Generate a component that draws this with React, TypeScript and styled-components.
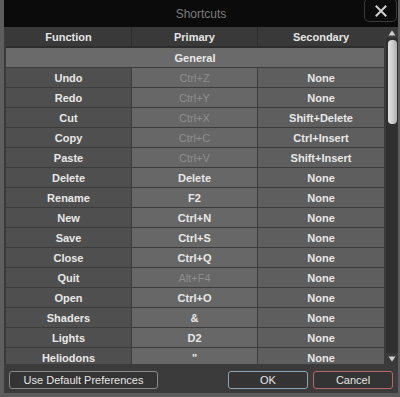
import styled, { createGlobalStyle } from 'styled-components';

const GlobalStyle = createGlobalStyle`
    html, body {
        margin: 0;
        padding: 0;
        background: #3a3a3a;
        font-family: "Liberation Sans", Arial, sans-serif;
    }
`;

type Shortcut = {
    name: string;
    primary: string;
    secondary: string;
    disabled?: boolean;
};

const shortcuts: Shortcut[] = [
    { name: 'Undo', primary: 'Ctrl+Z', secondary: 'None', disabled: true },
    { name: 'Redo', primary: 'Ctrl+Y', secondary: 'None', disabled: true },
    { name: 'Cut', primary: 'Ctrl+X', secondary: 'Shift+Delete', disabled: true },
    { name: 'Copy', primary: 'Ctrl+C', secondary: 'Ctrl+Insert', disabled: true },
    { name: 'Paste', primary: 'Ctrl+V', secondary: 'Shift+Insert', disabled: true },
    { name: 'Delete', primary: 'Delete', secondary: 'None' },
    { name: 'Rename', primary: 'F2', secondary: 'None' },
    { name: 'New', primary: 'Ctrl+N', secondary: 'None' },
    { name: 'Save', primary: 'Ctrl+S', secondary: 'None' },
    { name: 'Close', primary: 'Ctrl+Q', secondary: 'None' },
    { name: 'Quit', primary: 'Alt+F4', secondary: 'None', disabled: true },
    { name: 'Open', primary: 'Ctrl+O', secondary: 'None' },
    { name: 'Shaders', primary: '&', secondary: 'None' },
    { name: 'Lights', primary: 'D2', secondary: 'None' },
    { name: 'Heliodons', primary: '"', secondary: 'None' },
];

const Window = styled.div`
    width: 394px;
    height: 393px;
    display: flex;
    flex-direction: column;
    border-left: 4px solid #5e5e5e;
    border-right: 2px solid #5e5e5e;
    border-bottom: 4px solid #5a5a5a;
    background: #3a3a3a;
    overflow: hidden;
`;

const TitleBar = styled.div`
    height: 27px;
    flex: none;
    background: #0b0b0b;
    position: relative;
    display: flex;
    align-items: center;
    justify-content: center;
    color: #7c7c7c;
    font-size: 12px;
`;

const CloseButton = styled.div`
    position: absolute;
    right: 1px;
    top: -2px;
    width: 33px;
    height: 24px;
    box-sizing: border-box;
    border: 1px solid #3a3a3a;
    border-radius: 5px;
    display: flex;
    align-items: center;
    justify-content: center;
    padding-top: 2px;
`;

const Body = styled.div`
    height: 337px;
    flex: none;
    display: flex;
    padding-left: 2px;
    background: #3a3a3a;
    overflow: hidden;
`;

const Table = styled.div`
    width: 378px;
    display: flex;
    flex-direction: column;
`;

const Row = styled.div`
    display: grid;
    grid-template-columns: 126px 126px 126px;
    flex: none;
`;

const HeaderCell = styled.div`
    height: 19px;
    background: #393939;
    border-bottom: 2px solid #2c2c2c;
    border-right: 1px solid #2e2e2e;
    display: flex;
    align-items: center;
    justify-content: center;
    color: #e4e4e4;
    font-size: 11px;
    font-weight: bold;
    &:last-child {
        border-right: none;
    }
`;

const GroupRow = styled.div`
    height: 19px;
    flex: none;
    background: #6a6a6a;
    border-bottom: 1px solid #3c3c3c;
    display: flex;
    align-items: center;
    justify-content: center;
    color: #e8e8e8;
    font-size: 11px;
    font-weight: bold;
`;

const Cell = styled.div<{ $bg: string; $disabled?: boolean }>`
    height: 19px;
    background: ${({ $bg }) => $bg};
    border-bottom: 1px solid #3c3c3c;
    border-right: 1px solid #3c3c3c;
    display: flex;
    align-items: center;
    justify-content: center;
    color: ${({ $disabled }) => ($disabled ? '#8e8e8e' : '#e8e8e8')};
    font-size: 11px;
    font-weight: ${({ $disabled }) => ($disabled ? 'normal' : 'bold')};
    &:last-child {
        border-right: none;
    }
`;

const Scrollbar = styled.div`
    width: 12px;
    margin-left: 2px;
    background: #2f2f2f;
    display: flex;
    flex-direction: column;
    align-items: center;
`;

const ArrowBox = styled.div`
    width: 12px;
    height: 11px;
    flex: none;
    display: flex;
    align-items: center;
    justify-content: center;
    background: #3a3a3a;
`;

const Thumb = styled.div`
    width: 9px;
    height: 84px;
    margin-top: 2px;
    border-radius: 4px;
    background: linear-gradient(to right, #e2e2e2, #c8c8c8 60%, #ababab);
`;

const Spacer = styled.div`
    flex: 1;
`;

const Footer = styled.div`
    height: 29px;
    flex: none;
    display: flex;
    align-items: flex-start;
    padding: 7px 0 0 5px;
    box-sizing: border-box;
    background: #3b3b3b;
`;

const Button = styled.button<{ $accent: string; $width: number }>`
    width: ${({ $width }) => $width}px;
    height: 18px;
    box-sizing: border-box;
    border: 1px solid ${({ $accent }) => $accent};
    border-radius: 3px;
    background: #343434;
    color: #e6e6e6;
    font-family: "Liberation Sans", Arial, sans-serif;
    font-size: 11px;
    padding: 0;
    display: flex;
    align-items: center;
    justify-content: center;
`;

const ButtonGroup = styled.div`
    margin-left: auto;
    margin-right: 5px;
    display: flex;
    gap: 5px;
`;

const App = () => {
    return (
        <>
            <GlobalStyle />
            <Window>
                <TitleBar>
                    Shortcuts
                    <CloseButton>
                        <svg width="12" height="12" viewBox="0 0 12 12">
                            <path d="M1.5 1.5 L10.5 10.5 M10.5 1.5 L1.5 10.5" stroke="#d0d0d0" strokeWidth="2" strokeLinecap="square" />
                        </svg>
                    </CloseButton>
                </TitleBar>
                <Body>
                    <Table>
                        <Row>
                            <HeaderCell>Function</HeaderCell>
                            <HeaderCell>Primary</HeaderCell>
                            <HeaderCell>Secondary</HeaderCell>
                        </Row>
                        <GroupRow>General</GroupRow>
                        {shortcuts.map((s) => (
                            <Row key={s.name}>
                                <Cell $bg="#4f4f4f">{s.name}</Cell>
                                <Cell $bg="#676767" $disabled={s.disabled}>{s.primary}</Cell>
                                <Cell $bg="#5e5e5e">{s.secondary}</Cell>
                            </Row>
                        ))}
                    </Table>
                    <Scrollbar>
                        <ArrowBox>
                            <svg width="8" height="6" viewBox="0 0 8 6">
                                <path d="M4 0.5 L7.5 5.5 L0.5 5.5 Z" fill="#d0d0d0" />
                            </svg>
                        </ArrowBox>
                        <Thumb />
                        <Spacer />
                        <ArrowBox>
                            <svg width="8" height="6" viewBox="0 0 8 6">
                                <path d="M0.5 0.5 L7.5 0.5 L4 5.5 Z" fill="#d0d0d0" />
                            </svg>
                        </ArrowBox>
                    </Scrollbar>
                </Body>
                <Footer>
                    <Button $accent="#8a8a8a" $width={149}>Use Default Preferences</Button>
                    <ButtonGroup>
                        <Button $accent="#8fa4b4" $width={80}>OK</Button>
                        <Button $accent="#b46868" $width={80}>Cancel</Button>
                    </ButtonGroup>
                </Footer>
            </Window>
        </>
    );
};

export default App;
